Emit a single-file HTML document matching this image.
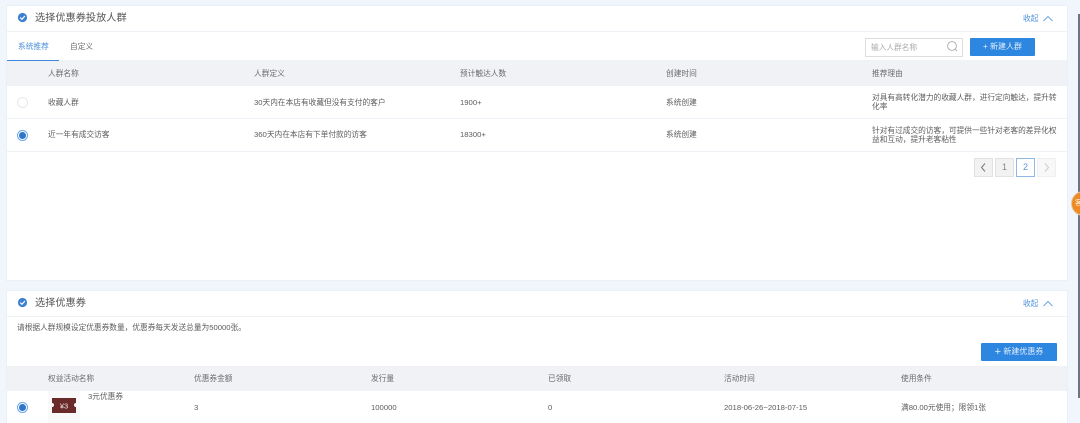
<!DOCTYPE html>
<html lang="zh"><head><meta charset="utf-8">
<style>
html,body{margin:0;padding:0;width:1080px;height:423px;overflow:hidden;background:#f1f6fd}
body{position:relative;font-family:"Liberation Sans","Noto Sans CJK SC",sans-serif;color:#5c5c5c;font-size:7.7px}
#w{position:absolute;left:0;top:0;width:1080px;height:423px;filter:blur(.35px)}
.a{position:absolute;white-space:nowrap;line-height:12px;margin-top:1px}
.b{position:absolute}
.card{position:absolute;left:7px;width:1060px;background:#fff;box-shadow:0 0 0 1px #e8f0fa}
.title{font-size:10.2px;color:#555;line-height:14px}
.hd{color:#6a6a6a}
.blue{color:#4a8fdc}
.line{position:absolute;height:1px;background:#eff2f6}
.btn{margin-top:0;background:#2d86e0;color:#e4effb;text-align:center;border-radius:1px;font-size:8px}
.pg{position:absolute;top:158px;width:17px;height:17px;background:#f2f2f2;border:1px solid #e2e2e2;text-align:center;line-height:17px;color:#888;font-size:9px}
</style></head><body><div id="w">

<div class="card" style="top:6px;height:274px"></div>
<div class="card" style="top:291px;height:132px"></div>

<svg class="b" style="left:17px;top:12px" width="12" height="12" viewBox="0 0 12 12"><circle cx="5.5" cy="5.5" r="4.6" fill="#3d80d2"/><path d="M3.2 5.6 5 7.3 7.9 4" stroke="#fff" stroke-width="1.2" fill="none"/></svg>
<div class="a title" style="left:35px;top:11px">选择优惠券投放人群</div>
<div class="a blue" style="left:1023px;top:12px">收起</div>
<svg class="b" style="left:1042px;top:14px" width="12" height="9" viewBox="0 0 12 9"><path d="M1.5 7 6 2.5 10.5 7" stroke="#6fa5e3" stroke-width="1" fill="none"/></svg>
<div class="line" style="left:7px;top:31px;width:1060px"></div>

<div class="a blue" style="left:18px;top:40px">系统推荐</div>
<div class="a" style="left:70px;top:40px;color:#6a6a6a">自定义</div>

<div class="b" style="left:865px;top:38px;width:96px;height:17px;border:1px solid #ddd;background:#fff"></div>
<div class="a" style="left:871px;top:41px;color:#aaa">输入人群名称</div>
<svg class="b" style="left:946px;top:40px" width="13" height="13" viewBox="0 0 13 13"><circle cx="6" cy="6" r="4.4" stroke="#aaa" stroke-width=".9" fill="none"/><path d="M9.2 9.2 11 11" stroke="#aaa" stroke-width=".9"/></svg>
<div class="a btn" style="left:970px;top:38px;width:65px;height:18px;line-height:18px">+ 新建人群</div>

<div class="b" style="left:7px;top:60px;width:1060px;height:26px;background:#f0f2f5"></div>
<div class="b" style="left:7px;top:60px;width:52px;height:1px;background:#3d86d8"></div>
<div class="a hd" style="left:48px;top:67px">人群名称</div>
<div class="a hd" style="left:254px;top:67px">人群定义</div>
<div class="a hd" style="left:460px;top:67px">预计触达人数</div>
<div class="a hd" style="left:666px;top:67px">创建时间</div>
<div class="a hd" style="left:872px;top:67px">推荐理由</div>

<div class="b" style="left:17px;top:97px;width:9px;height:9px;border:1px solid #e8e8e8;border-radius:50%;background:#fff"></div>
<div class="a" style="left:48px;top:96px">收藏人群</div>
<div class="a" style="left:254px;top:96px">30天内在本店有收藏但没有支付的客户</div>
<div class="a" style="left:460px;top:96px">1900+</div>
<div class="a" style="left:666px;top:96px">系统创建</div>
<div class="a" style="left:872px;top:92px;width:186px;white-space:normal;line-height:9px">对具有高转化潜力的收藏人群，进行定向触达，提升转化率</div>
<div class="line" style="left:7px;top:118px;width:1060px"></div>

<div class="b" style="left:17px;top:130px;width:9px;height:9px;border:1px solid #6aa5e8;border-radius:50%;background:#fff"></div>
<div class="b" style="left:19px;top:132px;width:7px;height:7px;border-radius:50%;background:#2f74c8"></div>
<div class="a" style="left:48px;top:128px">近一年有成交访客</div>
<div class="a" style="left:254px;top:128px">360天内在本店有下单付款的访客</div>
<div class="a" style="left:460px;top:128px">18300+</div>
<div class="a" style="left:666px;top:128px">系统创建</div>
<div class="a" style="left:872px;top:125px;width:186px;white-space:normal;line-height:9px">针对有过成交的访客，可提供一些针对老客的差异化权益和互动，提升老客粘性</div>
<div class="line" style="left:7px;top:151px;width:1060px"></div>

<div class="pg" style="left:974px"><svg width="17" height="17" viewBox="0 0 17 17"><path d="M10 4.5 6.5 8.5 10 12.5" stroke="#777" stroke-width="1" fill="none"/></svg></div>
<div class="pg" style="left:995px">1</div>
<div class="pg" style="left:1016px;background:#fff;border-color:#8fb8e6;color:#5b95dc">2</div>
<div class="pg" style="left:1037px;background:#f8f8f8;border-color:#efefef"><svg width="17" height="17" viewBox="0 0 17 17"><path d="M7 4.5 10.5 8.5 7 12.5" stroke="#ccc" stroke-width="1" fill="none"/></svg></div>

<svg class="b" style="left:17px;top:297px" width="12" height="12" viewBox="0 0 12 12"><circle cx="5.5" cy="5.5" r="4.6" fill="#3d80d2"/><path d="M3.2 5.6 5 7.3 7.9 4" stroke="#fff" stroke-width="1.2" fill="none"/></svg>
<div class="a title" style="left:35px;top:296px">选择优惠券</div>
<div class="a blue" style="left:1023px;top:297px">收起</div>
<svg class="b" style="left:1042px;top:299px" width="12" height="9" viewBox="0 0 12 9"><path d="M1.5 7 6 2.5 10.5 7" stroke="#6fa5e3" stroke-width="1" fill="none"/></svg>
<div class="line" style="left:7px;top:316px;width:1060px"></div>

<div class="a" style="left:17px;top:321px">请根据人群规模设定优惠券数量，优惠券每天发送总量为50000张。</div>
<div class="a btn" style="left:981px;top:343px;width:76px;height:18px;line-height:18px"><span style="font-size:11px;vertical-align:-1px">+</span> 新建优惠券</div>

<div class="b" style="left:7px;top:366px;width:1060px;height:25px;background:#f0f2f5"></div>
<div class="a hd" style="left:48px;top:372px">权益活动名称</div>
<div class="a hd" style="left:194px;top:372px">优惠券金额</div>
<div class="a hd" style="left:371px;top:372px">发行量</div>
<div class="a hd" style="left:548px;top:372px">已领取</div>
<div class="a hd" style="left:724px;top:372px">活动时间</div>
<div class="a hd" style="left:901px;top:372px">使用条件</div>

<div class="b" style="left:17px;top:402px;width:9px;height:9px;border:1px solid #6aa5e8;border-radius:50%;background:#fff"></div>
<div class="b" style="left:19px;top:404px;width:7px;height:7px;border-radius:50%;background:#2f74c8"></div>
<div class="b" style="left:48px;top:391px;width:32px;height:32px;background:#f9f9f9"></div>
<svg class="b" style="left:52px;top:398px" width="24" height="15" viewBox="0 0 24 15"><path d="M0 0H24V5a2 2 0 0 0 0 4V15H0V9a2 2 0 0 0 0-4Z" fill="#6b2a2a"/><text x="12" y="10.5" text-anchor="middle" font-size="7.5" fill="#f3e6e6" font-family="Liberation Sans, sans-serif">¥3</text></svg>
<div class="a" style="left:88px;top:390px">3元优惠券</div>
<div class="a" style="left:194px;top:401px">3</div>
<div class="a" style="left:371px;top:401px">100000</div>
<div class="a" style="left:548px;top:401px">0</div>
<div class="a" style="left:724px;top:401px">2018-06-26~2018-07-15</div>
<div class="a" style="left:901px;top:401px">满80.00元使用；限领1张</div>

<div class="b" style="left:1078px;top:14px;width:2px;height:384px;background:#6c7683"></div>
<div class="b" style="left:1071px;top:191px;width:23px;height:23px;border-radius:50%;background:#ef8a23;border:1px solid #e3c7a5"></div>
<div class="a" style="left:1075px;top:197px;color:#fff;font-size:7px">客</div>

</div></body></html>
